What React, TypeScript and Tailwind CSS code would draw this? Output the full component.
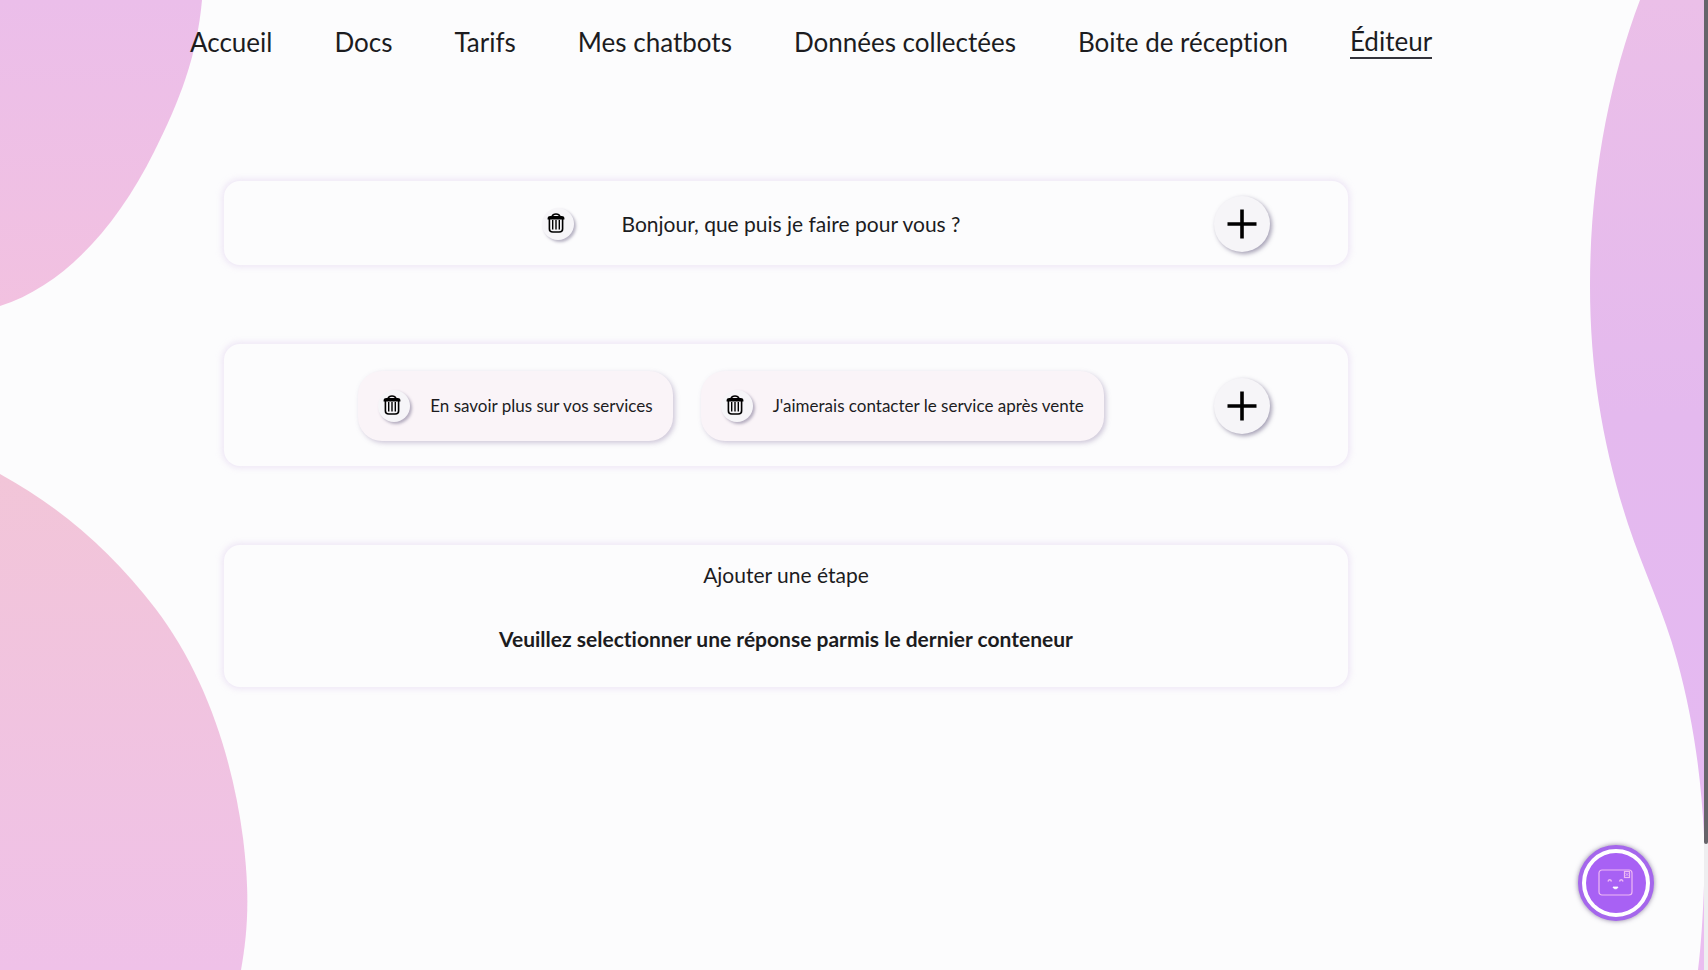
const navItems = [
  { label: "Accueil", href: "#accueil" },
  { label: "Docs", href: "#docs" },
  { label: "Tarifs", href: "#tarifs" },
  { label: "Mes chatbots", href: "#chatbots" },
  { label: "Données collectées", href: "#donnees" },
  { label: "Boite de réception", href: "#reception" },
  { label: "Éditeur", href: "#editeur", active: true },
];

const answers = ["En savoir plus sur vos services", "J'aimerais contacter le service après vente"];

const cardClass =
  "flex w-full items-center rounded-2xl bg-[#fcfcfd] shadow-[0_0_6px_2px_rgba(215,195,235,0.38)]";

function Blobs() {
  return (
    <div aria-hidden="true" className="pointer-events-none absolute inset-0 overflow-hidden">
      <svg className="absolute left-0 top-0" width="210" height="310" viewBox="0 0 210 310">
        <defs>
          <linearGradient id="blobTop" x1="0" y1="0" x2="0" y2="1">
            <stop offset="0" stopColor="#ebbeea" />
            <stop offset="1" stopColor="#f2c1e0" />
          </linearGradient>
        </defs>
        <path d="M0 0H202C197 56 180 100 154 152C118 224 66 285 0 306Z" fill="url(#blobTop)" />
      </svg>
      <svg className="absolute left-0 top-[474px]" width="250" height="800" viewBox="0 474 250 800">
        <defs>
          <linearGradient id="blobBottom" x1="0" y1="474" x2="0" y2="970" gradientUnits="userSpaceOnUse">
            <stop offset="0" stopColor="#f2c5d8" />
            <stop offset="1" stopColor="#efc1e8" />
          </linearGradient>
        </defs>
        <path
          d="M0 474C62 508 112 552 155 608C204 672 232 755 243 838C250 895 248 930 241 970C220 1080 130 1190 0 1240Z"
          fill="url(#blobBottom)"
        />
      </svg>
      <svg className="absolute right-1 top-0" width="124" height="1100" viewBox="1580 0 124 1100">
        <defs>
          <linearGradient id="blobRight" x1="0" y1="0" x2="0" y2="830" gradientUnits="userSpaceOnUse">
            <stop offset="0" stopColor="#ebbfe8" />
            <stop offset="0.5" stopColor="#e4b9ee" />
            <stop offset="1" stopColor="#e5b9f2" />
          </linearGradient>
        </defs>
        <path
          d="M1640 0C1608 84 1590 184 1590 286C1590 374 1604 450 1628 524C1644 572 1664 612 1677 660C1693 718 1701 775 1704 835V0Z"
          fill="url(#blobRight)"
        />
        <path d="M1704 885C1703 915 1701 945 1698 970L1680 1080H1704Z" fill="#eabdf0" />
      </svg>
    </div>
  );
}

function TrashButton({ label }: { label: string }) {
  return (
    <button
      type="button"
      aria-label={label}
      className="flex size-8 shrink-0 items-center justify-center rounded-full bg-[#f6f5f8] pb-0.5 pr-1 shadow-[2px_2px_3px_rgba(80,70,110,0.4)]"
    >
      <svg width="18" height="20" viewBox="0 0 18 20" fill="none" stroke="#000">
        <path d="M5 3.400C5.600 1.600 6.800 1 9 1s3.400.6 4 2.400" strokeWidth="1.600" />
        <path d="M.6 6.600V5.400C.6 3.800 1.800 3 3.200 3h11.600c1.400 0 2.600.8 2.600 2.400v1.200z" fill="#000" stroke="none" />
        <path d="M2.400 6v10c0 2 1.400 3 3.400 3h6.400c2 0 3.400-1 3.400-3V6" strokeWidth="1.600" />
        <path d="M5.700 7v9.500M9 7v9.500M12.300 7v9.500" strokeWidth="1.400" />
      </svg>
    </button>
  );
}

function AddButton({ label }: { label: string }) {
  return (
    <button
      type="button"
      aria-label={label}
      className="flex size-14 shrink-0 items-center justify-center rounded-full bg-[#f6f5f8] shadow-[2px_2px_4px_rgba(80,70,110,0.5)]"
    >
      <svg width="30" height="30" viewBox="0 0 30 30" stroke="#000" strokeWidth="3.600">
        <path d="M15 .5v29M.5 15h29" />
      </svg>
    </button>
  );
}

export default function App() {
  return (
    <div className="relative min-h-screen bg-[#fcfcfd] font-['Lato','Open_Sans',sans-serif] text-[#1c1c1f] [font-variant-ligatures:none]">
      <Blobs />
      <header className="relative pl-[190px] pt-6">
        <nav className="flex items-center gap-[62px] whitespace-nowrap text-[26px] leading-9">
          {navItems.map((item) => (
            <a
              key={item.label}
              href={item.href}
              aria-current={item.active ? "page" : undefined}
              className={item.active ? "border-b-2 border-[#33333b] leading-8" : "leading-9"}
            >
              {item.label}
            </a>
          ))}
        </nav>
      </header>

      <main className="relative flex flex-col gap-[79px] pl-56 pr-90 pt-[121px]">
        <section className={`${cardClass} h-[84px] justify-end pr-[78px] pt-0.5`}>
          <div className="flex flex-1 items-center justify-center gap-12 pl-16">
            <TrashButton label="Supprimer la question" />
            <p className="text-[21px]">Bonjour, que puis je faire pour vous ?</p>
          </div>
          <AddButton label="Ajouter une question" />
        </section>

        <section className={`${cardClass} h-[122px] justify-end pr-[78px] pt-0.5`}>
          <ul className="flex flex-1 items-center justify-center gap-7 pl-6">
            {answers.map((answer) => (
              <li
                key={answer}
                className="flex h-[70px] items-center gap-5 rounded-3xl bg-[#faf4f8] px-5 text-[17px] shadow-[2px_2px_5px_rgba(120,100,150,0.35)]"
              >
                <TrashButton label={`Supprimer : ${answer}`} />
                <span>{answer}</span>
              </li>
            ))}
          </ul>
          <AddButton label="Ajouter une réponse" />
        </section>

        <section className={`${cardClass} h-[142px] flex-col justify-start gap-9 pt-4 text-[21px] leading-7`}>
          <h2>Ajouter une étape</h2>
          <p className="font-bold">Veuillez selectionner une réponse parmis le dernier conteneur</p>
        </section>
      </main>

      <button
        type="button"
        aria-label="Ouvrir le chatbot"
        className="fixed bottom-[49px] right-[54px] flex size-19 items-center justify-center rounded-full border-4 border-[#a567ec] bg-white shadow-[0_0_5px_rgba(70,50,100,0.6)]"
      >
        <span className="flex size-15 items-center justify-center rounded-full bg-[#a861f4]">
          <svg width="36" height="28" viewBox="0 0 36 28" fill="none" stroke="#eeb9f4" strokeWidth="1.200">
            <rect x="1" y="1" width="33" height="25" rx="3" />
            <rect x="26.500" y="2.500" width="5" height="6" />
            <path d="M27.500 4l3 3M30.500 4l-3 3" strokeWidth=".8" />
            <path d="M10 12.500c.8-2.300 2.700-2.300 3.500 0M21.500 12.500c.8-2.300 2.700-2.300 3.500 0" strokeWidth="1.500" />
            <path d="M15 18h5c-.4 2.400-4.600 2.400-5 0z" fill="#fff" stroke="#fff" strokeWidth=".8" />
          </svg>
        </span>
      </button>

      <div aria-hidden="true" className="fixed inset-y-0 right-0 w-1 bg-[#eeeef0]">
        <div className="h-[87%] rounded-b bg-[#66646a]" />
      </div>
    </div>
  );
}
